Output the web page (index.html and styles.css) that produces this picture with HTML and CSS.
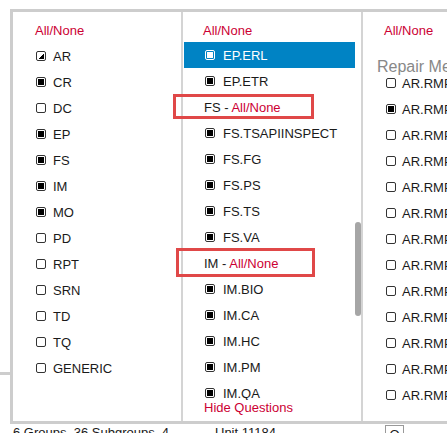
FILE: index.html
```html
<!DOCTYPE html>
<html>
<head>
<meta charset="utf-8">
<link rel="stylesheet" href="styles.css">
</head>
<body>
<div class="page">
  <div class="gutter"><div class="stub"></div></div>
  <div class="frame">
    <div class="col col-left">
      <div class="hdr"><span class="red">All/None</span></div>
      <div class="rows">
        <div class="row"><span class="cb partial"></span><span>AR</span></div>
        <div class="row"><span class="cb on"></span><span>CR</span></div>
        <div class="row"><span class="cb"></span><span>DC</span></div>
        <div class="row"><span class="cb on"></span><span>EP</span></div>
        <div class="row"><span class="cb on"></span><span>FS</span></div>
        <div class="row"><span class="cb on"></span><span>IM</span></div>
        <div class="row"><span class="cb on"></span><span>MO</span></div>
        <div class="row"><span class="cb"></span><span>PD</span></div>
        <div class="row"><span class="cb"></span><span>RPT</span></div>
        <div class="row"><span class="cb"></span><span>SRN</span></div>
        <div class="row"><span class="cb"></span><span>TD</span></div>
        <div class="row"><span class="cb"></span><span>TQ</span></div>
        <div class="row"><span class="cb"></span><span>GENERIC</span></div>
      </div>
    </div>
    <div class="col col-mid">
      <div class="hdr"><span class="red">All/None</span></div>
      <div class="scroller">
        <div class="list">
          <div class="row sel"><span class="cb on"></span><span>EP.ERL</span></div>
          <div class="row"><span class="cb on"></span><span>EP.ETR</span></div>
          <div class="row grp"><span>FS - <span class="red">All/None</span></span></div>
          <div class="row"><span class="cb on"></span><span>FS.TSAPIINSPECT</span></div>
          <div class="row"><span class="cb on"></span><span>FS.FG</span></div>
          <div class="row"><span class="cb on"></span><span>FS.PS</span></div>
          <div class="row"><span class="cb on"></span><span>FS.TS</span></div>
          <div class="row"><span class="cb on"></span><span>FS.VA</span></div>
          <div class="row grp"><span>IM - <span class="red">All/None</span></span></div>
          <div class="row"><span class="cb on"></span><span>IM.BIO</span></div>
          <div class="row"><span class="cb on"></span><span>IM.CA</span></div>
          <div class="row"><span class="cb on"></span><span>IM.HC</span></div>
          <div class="row"><span class="cb on"></span><span>IM.PM</span></div>
          <div class="row"><span class="cb on"></span><span>IM.QA</span></div>
        </div>
        <div class="track"><div class="thumb"></div></div>
      </div>
      <div class="hide red">Hide Questions</div>
      <div class="mark mark-fs"></div>
      <div class="mark mark-im"></div>
    </div>
    <div class="col col-right">
      <div class="hdr"><span class="red">All/None</span></div>
      <div class="title">Repair Methods</div>
      <div class="rows">
        <div class="row"><span class="cb"></span><span>AR.RMP01</span></div>
        <div class="row"><span class="cb on"></span><span>AR.RMP02</span></div>
        <div class="row"><span class="cb"></span><span>AR.RMP03</span></div>
        <div class="row"><span class="cb"></span><span>AR.RMP04</span></div>
        <div class="row"><span class="cb"></span><span>AR.RMP05</span></div>
        <div class="row"><span class="cb"></span><span>AR.RMP06</span></div>
        <div class="row"><span class="cb"></span><span>AR.RMP07</span></div>
        <div class="row"><span class="cb"></span><span>AR.RMP08</span></div>
        <div class="row"><span class="cb"></span><span>AR.RMP09</span></div>
        <div class="row"><span class="cb"></span><span>AR.RMP10</span></div>
        <div class="row"><span class="cb"></span><span>AR.RMP11</span></div>
        <div class="row"><span class="cb"></span><span>AR.RMP12</span></div>
        <div class="row"><span class="cb"></span><span>AR.RMP13</span></div>
      </div>
    </div>
  </div>
</div>
<div class="status">
  <span>6 Groups, 36 Subgroups, 4</span>
  <span>Unit 11184</span>
  <span class="obox">O</span>
</div>
</body>
</html>
```
FILE: styles.css
```css
html, body {
  margin: 0;
  padding: 0;
  overflow: hidden;
  background: #fff;
}
body {
  font-family: "Liberation Sans", Arial, sans-serif;
  font-size: 13px;
  color: #1a1a1a;
  width: 447px;
}
.red { color: #cc0033; }

.page {
  display: flex;
  padding-top: 9px;
}
.gutter {
  width: 10px;
  flex: none;
}
.stub {
  margin-top: 363px;
  height: 3px;
  background: #cdcdcd;
}
.frame {
  flex: 1;
  min-width: 0;
  height: 409px;
  display: flex;
  border-top: 3px solid #cdcdcd;
  border-left: 3px solid #cdcdcd;
  border-bottom: 3px solid #cdcdcd;
}
.col {
  flex: none;
  white-space: nowrap;
}
.hdr {
  padding-top: 11px;
  line-height: 16px;
}
.row {
  height: 26px;
  display: flex;
  align-items: center;
}
.cb {
  flex: none;
  width: 10px;
  height: 10px;
  box-sizing: border-box;
  border: 1px solid #333;
  border-radius: 2px;
  background: #fff;
  position: relative;
}
.cb.on::after,
.cb.partial::after {
  content: "";
  position: absolute;
  left: 1px;
  top: 1px;
  right: 1px;
  bottom: 1px;
  background: #000;
}
.cb.partial::after {
  background: linear-gradient(to bottom right, transparent 50%, #000 50%);
}

/* left */
.col-left {
  width: 168px;
}
.col-left .hdr {
  padding-left: 22px;
  margin-bottom: 4px;
}
.col-left .row {
  padding-left: 23px;
  gap: 7px;
}

/* middle */
.col-mid {
  width: 178px;
  border-left: 2px solid #d4d4d4;
  border-right: 2px solid #d4d4d4;
  position: relative;
}
.col-mid .hdr {
  padding-left: 20px;
  margin-bottom: 3px;
}
.scroller {
  height: 358px;
  display: flex;
}
.list {
  width: 172px;
  overflow: hidden;
}
.list .row {
  margin-left: 1px;
  padding-left: 21px;
  gap: 8px;
}
.list .row.grp {
  padding-left: 20px;
}
.row.sel {
  background: #0083c4;
  color: #fff;
}
.row.sel .cb {
  border-color: #fff;
  background: transparent;
}
.row.sel .cb::after {
  background: #fff;
}
.track {
  width: 6px;
  flex: none;
}
.thumb {
  margin-top: 180px;
  height: 94px;
  background: #a6a6a6;
  border-radius: 3px;
}
.hide {
  line-height: 16px;
  padding-left: 21px;
}
.mark {
  position: absolute;
  border: 3px solid #e04848;
  box-sizing: border-box;
}
.mark-fs {
  left: -10px;
  top: 82px;
  width: 141px;
  height: 25px;
}
.mark-im {
  left: -7px;
  top: 236px;
  width: 139px;
  height: 29px;
}

/* right */
.col-right {
  flex: 1;
  min-width: 0;
  overflow: hidden;
}
.col-right .hdr {
  padding-left: 21px;
}
.title {
  margin-top: 18px;
  margin-bottom: -7px;
  padding-left: 14px;
  font-size: 16px;
  line-height: 20px;
  color: #888;
}
.col-right .row {
  padding-left: 23px;
  gap: 6px;
}

/* status */
.status {
  display: grid;
  grid-template-columns: 202px 170px auto;
  padding-left: 13px;
  padding-top: 1px;
  line-height: 16px;
  white-space: nowrap;
}
.obox {
  justify-self: start;
  width: 19px;
  height: 18px;
  box-sizing: border-box;
  border: 1px solid #999;
  text-align: center;
  line-height: 18px;
}
```
